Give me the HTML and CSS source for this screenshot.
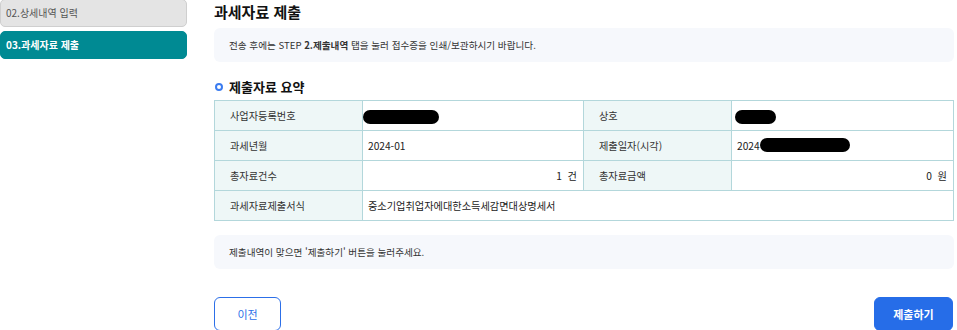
FILE: index.html
```html
<!DOCTYPE html>
<html lang="ko">
<head>
  <meta charset="UTF-8">
  <title>과세자료 제출</title>
  <link rel="stylesheet" href="styles.css">
</head>
<body>
  <div class="wrap">
    <!-- Steps -->
    <div class="steps">
      <div class="step">02.상세내역 입력</div>
      <div class="step active">03.과세자료 제출</div>
    </div>

    <!-- Content -->
    <div class="content">
      <h2 class="title">과세자료 제출</h2>
      <div class="notice">전송 후에는 STEP <b>2.제출내역</b> 탭을 눌러 접수증을 인쇄/보관하시기 바랍니다.</div>

      <h3 class="sub-title"><span class="dot"></span>제출자료 요약</h3>
      <table class="summary">
        <colgroup>
          <col class="c-th">
          <col class="c-td">
          <col class="c-th">
          <col>
        </colgroup>
        <tr>
          <th>사업자등록번호</th>
          <td><span class="mask w76"></span></td>
          <th>상호</th>
          <td><span class="mask w41"></span></td>
        </tr>
        <tr>
          <th>과세년월</th>
          <td>2024-01</td>
          <th>제출일자(시각)</th>
          <td>2024<span class="mask w90"></span></td>
        </tr>
        <tr>
          <th>총자료건수</th>
          <td class="num">1&nbsp; 건</td>
          <th>총자료금액</th>
          <td class="num">0&nbsp; 원</td>
        </tr>
        <tr>
          <th>과세자료제출서식</th>
          <td colspan="3">중소기업취업자에대한소득세감면대상명세서</td>
        </tr>
      </table>

      <div class="notice bottom">제출내역이 맞으면 '제출하기' 버튼을 눌러주세요.</div>

      <div class="btns">
        <button class="btn prev">이전</button>
        <button class="btn submit">제출하기</button>
      </div>
    </div>
  </div>
</body>
</html>
```

FILE: styles.css
```css
body {
  margin: 0;
  font-family: "Noto Sans CJK KR", "Noto Sans", sans-serif;
  color: #222;
  background: #fff;
}

.wrap {
  display: flex;
  width: 957px;
}

/* Steps */
.steps {
  width: 187px;
  display: flex;
  flex-direction: column;
  gap: 4px;
}

.step {
  height: 28px;
  line-height: 26px;
  margin-top: -1px;
  padding-left: 5px;
  font-size: 10px;
  color: #555;
  background: #e4e4e4;
  border: 1px solid #cfcfcf;
  border-radius: 5px;
  box-sizing: border-box;
}

.step.active {
  margin-top: 0;
  color: #fff;
  font-weight: bold;
  background: #008a93;
  border-color: #008a93;
}

/* Content */
.content {
  margin-left: 27px;
  width: 740px;
}

.title {
  margin: 0;
  height: 28px;
  line-height: 24px;
  font-size: 15px;
  font-weight: bold;
  color: #111;
}

.notice {
  background: #f6f8fc;
  border-radius: 6px;
  height: 34px;
  line-height: 34px;
  padding-left: 15px;
  font-size: 9.6px;
  color: #333;
}

.sub-title {
  margin: 12px 0 0;
  height: 26px;
  line-height: 22px;
  font-size: 13px;
  font-weight: bold;
  color: #111;
  display: flex;
  align-items: center;
}

.dot {
  width: 4px;
  height: 4px;
  border: 2px solid #3b7cf0;
  border-radius: 50%;
  margin: 0 6px 0 1px;
}

/* Summary table */
.summary {
  width: 740px;
  table-layout: fixed;
  border-collapse: collapse;
  font-size: 10.2px;
}

.c-th { width: 148px; }
.c-td { width: 221px; }

.summary th,
.summary td {
  height: 30px;
  padding: 0;
  border: 1px solid #b3d7db;
  box-sizing: border-box;
  text-align: left;
}

.summary th {
  padding-left: 15px;
  font-weight: normal;
  background: #eef7f7;
  color: #333;
}

.summary td {
  padding-left: 5px;
  color: #222;
}

.summary td.num {
  text-align: right;
  padding-right: 6px;
}

.mask {
  display: inline-block;
  vertical-align: middle;
  height: 14px;
  border-radius: 7px;
  background: #000;
}

.w76 { width: 76px; margin-left: -5px; }
.w41 { width: 41px; margin-left: -2px; }
.w90 { width: 90px; margin-top: -4px; }

.notice.bottom {
  margin-top: 14px;
}

/* Buttons */
.btns {
  display: flex;
  justify-content: space-between;
  margin-top: 28px;
}

.btn {
  height: 34px;
  border-radius: 6px;
  font-family: inherit;
  font-size: 11px;
  cursor: pointer;
}

.prev {
  width: 67px;
  background: #fff;
  border: 1px solid #2c6fe8;
  color: #2c6fe8;
}

.submit {
  width: 79px;
  background: #266de8;
  border: 1px solid #266de8;
  color: #fff;
  font-weight: bold;
  margin-right: 1px;
}
```
